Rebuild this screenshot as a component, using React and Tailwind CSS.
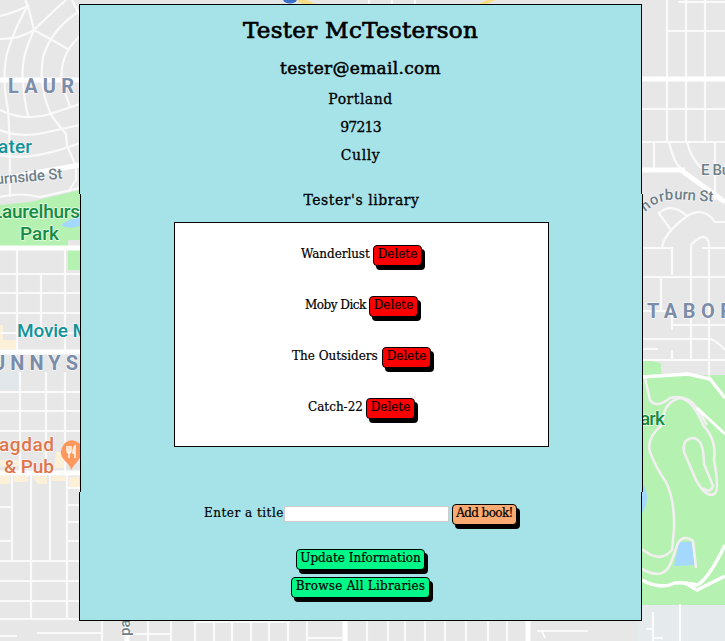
const serif = "font-['DejaVu_Serif','Liberation_Serif',serif]";

const leftRoads = [
  'M25 0L28 6L34 30L68 49', 'M0 16Q17 12 29 5', 'M0 39Q20 39 34 30Q48 16 66 0',
  'M28 5Q14 30 8 50Q1 75 8 110Q10 130 10 197', 'M34 30Q20 60 23 80Q24 100 28 116',
  'M80 11Q52 28 43 57Q38 90 53 118L66 134L67 146L76 166V180L68 192',
  'M80 36Q58 56 62 84L70 107', 'M72 0L80 16',
  'M0 110Q25 122 50 114L80 104', 'M0 130Q20 138 43 133L80 125', 'M0 155Q30 162 80 143',
  'M0 197Q20 192 40 197L80 188',
  'M0 274H80M0 293H80M0 313H80M0 333H80M0 392H80M0 411H80M0 431H80',
  'M17 247V352M41 274V340M65 247V352M20 372V473M46 372V473M65 372V473',
  'M12 475V561M31 475V620M50 475V561M67 475V620M0 507H12M0 541H12M67 488H80M67 505H80M67 522H80M67 541H80',
  'M0 561H80M0 581H80M0 601H80M0 619H80M0 636H17M37 633H102M132 634H171M102 615V641M148 620V641M171 620V641',
  'M195 622H290M195 620V641M214 620V641M232 620V641M251 620V641M269 620V641M288 620V641M307 620V641M307 638H342M367 620V641M388 620V641',
  'M405 620V641M425 620V641M445 620V641M466 620V641M488 620V641M507 620V641',
];

const rightRoads = [
  'M667 0V142M686 0V142M705 0V142M666 31H725M678 2H725M642 109H725M642 142H725M654 142V168',
  'M669 142Q673 160 680 168M687 142Q690 156 701 168M715 142V200',
  'M658 212L671 230M662 249Q662 235 687 216Q704 206 715 222H725M659 213Q672 202 687 216',
  'M642 248H672V275M642 277H725M661 277V310M642 311H672V330M672 325H725M642 339H710Q716 340 725 350M642 360H725M642 349H658M672 350V360',
  'M691 360V245Q705 230 709 243V378M702 248H725',
];

const parkRoads = [
  'M645 378L650 400Q656 409 670 398Q687 394 697 408L707 425',
  'M663 420Q664 402 680 398Q693 400 703 425Q717 440 714 460Q720 492 714 494Q706 498 696 480L684 452Q682 438 694 438Q704 440 704 464L713 486Q710 494 703 488',
  'M662 425Q646 438 650 452Q656 468 666 482Q675 500 674 530L672 550Q660 564 642 549',
  'M642 569Q665 582 672 560L678 543Q684 534 693 541L696 568',
];

function MapBackground() {
  return (
    <svg className="absolute inset-0 block h-[641px] w-[725px] font-['Roboto',sans-serif]" viewBox="0 0 725 641" aria-hidden="true">
      <rect width="725" height="641" fill="#e7e7e7" />
      <path d="M638 605H725V641H638Z" fill="#e5eaed" />
      <path d="M0 205L30 202L80 190V240H68V270H80V246H0Z" fill="#b5f1b0" />
      <path d="M61 225Q70 218 80 217V226Q67 230 61 225Z" fill="#a5d8ff" />
      <path d="M0 372H20V392H0Z" fill="#e1e7eb" />
      <path d="M0 325H3V340H17V349H0ZM0 460H24V466H0ZM56 452H64V468H54ZM0 476H10V484H0ZM14 476H28V482H14ZM32 476H47V484H38ZM52 476H66V481H52ZM69 477H79V487H69Z" fill="#fcf0d9" />
      <path d="M642 359L661 363V375H725V605H642Z" fill="#b5f1b0" />
      <path d="M642 482Q652 498 642 513ZM679 542H692L695 565L674 566Z" fill="#a5d8ff" />
      <g fill="none" stroke="#fafafa" strokeWidth="2.2">
        {[...leftRoads, ...rightRoads].map((d) => <path key={d} d={d} />)}
      </g>
      <g fill="none" stroke="#f2eff0" strokeWidth="2.6">
        {parkRoads.map((d) => <path key={d} d={d} />)}
      </g>
      <g fill="none" stroke="#fff">
        <path strokeWidth="5" d="M0 80H80M0 179L80 165M0 248H80M0 352H80M0 473H80M642 79H725M642 170H685M678 168L725 202M345 620V641M528 620V641M127 620V641" />
        <path strokeWidth="3.5" d="M642 377L688 374L710 379L725 398M725 545Q708 580 697 585Q683 582 675 583Q660 590 642 580M685 583L697 590L725 576" />
        <path strokeWidth="3" d="M697 408L725 434" />
        <path strokeWidth="1.6" d="M653 612V641M680 604V641M646 629H653M653 638H663M369 0V4M392 0V4M415 0V4M537 631H588M542 631L545 638" />
      </g>
      <path d="M296 0H307L317 5H303ZM476 5L487 0H496L484 5Z" fill="#f8de83" />
      <ellipse cx="290" cy="-1" rx="7" ry="4.5" fill="#3c6fc8" />
      <g stroke="#fff" strokeWidth="1.5" strokeOpacity="0.7" paintOrder="stroke" strokeLinejoin="round">
        <g fill="#7b8da9" fontSize="20" fontWeight="700">
          <text x="8" y="93" textLength="66">LAUR</text>
          <text x="-8" y="370" textLength="86">UNNYS</text>
          <text x="647" y="318" textLength="86">TABOR</text>
        </g>
        <g fill="#12939a" fontSize="19" fontWeight="500">
          <text x="-2" y="153" textLength="34">ater</text>
          <text x="17" y="337" textLength="72">Movie M</text>
        </g>
        <g fill="#168b44" fontSize="19" fontWeight="500">
          <text x="-8" y="218" textLength="88">Laurelhurs</text>
          <text x="20" y="240" textLength="39">Park</text>
          <text x="629" y="425" textLength="36">Park</text>
        </g>
        <g fill="#df754b" fontSize="19" fontWeight="500">
          <text x="-1" y="451" textLength="55">agdad</text>
          <text x="4" y="473" textLength="50">&amp; Pub</text>
        </g>
        <g fill="#6e7f89" fontSize="15" fontWeight="500">
          <text x="-4" y="184" textLength="67" transform="rotate(-5 0 184)">urnside St</text>
          <text x="701" y="175" textLength="29">E Bu</text>
          <text x="638" y="216" transform="rotate(-42 638 216)">T</text>
          <text x="645" y="212" transform="rotate(-38 645 212)">h</text>
          <text x="652" y="206" transform="rotate(-26 652 206)">o</text>
          <text x="660" y="202" transform="rotate(-12 660 202)">r</text>
          <text x="665" y="200" transform="rotate(-3 665 200)">b</text>
          <text x="674" y="199" textLength="39" transform="rotate(4 674 199)">urn St</text>
          <text x="130" y="636" transform="rotate(-90 130 636)">pa</text>
        </g>
      </g>
      <path d="M71 470Q70 465 65 461Q57 453 64 444Q71 437 79 443Q86 451 77 462Q73 466 71 470Z" fill="#ff985c" />
      <path d="M67 446V450Q67 453 69 453V458M71 446V450Q71 453 69 453M69 446V453M75 458V446Q73 448 73 453H75" fill="none" stroke="#fff" strokeWidth="1.4" />
    </svg>
  );
}

const books = [
  { title: 'Wanderlust', row: 'pl-[126px]', text: 'w-[69px] tracking-[-0.05px]' },
  { title: 'Moby Dick', row: 'pl-[130px]', text: 'w-[61px] tracking-[-0.5px]' },
  { title: 'The Outsiders', row: 'pl-[117px]', text: 'w-[87px] tracking-[0px]' },
  { title: 'Catch-22', row: 'pl-[133px]', text: 'w-[55px] tracking-[0px]' },
];

function Button({ children, className }) {
  return (
    <button className={`flex h-[21px] shrink-0 items-start justify-center whitespace-nowrap rounded-[4px] border border-black text-xs leading-[17px] shadow-[3px_4px_0_#000] [-webkit-text-stroke:0.2px_black] ${className}`}>
      {children}
    </button>
  );
}

export default function App() {
  return (
    <div className={`relative h-[641px] w-[725px] overflow-hidden text-black [-webkit-text-stroke:0.2px_black] ${serif}`}>
      <div className="[-webkit-text-stroke:0px]">
        <MapBackground />
      </div>
      <main className="relative ml-[79px] w-[564px] pt-1">
        <section className="h-[190px] w-[563px] border border-b-0 border-black bg-[#a6e3e9] text-center">
          <h1 className="pt-[8px] text-[23px] leading-[34px] tracking-[0.3px] [-webkit-text-stroke:0.7px_black]">Tester McTesterson</h1>
          <h2 className="pt-[8px] text-[17px] leading-[26px] tracking-[0.3px] [-webkit-text-stroke:0.5px_black]">tester@email.com</h2>
          <p className="pt-[8px] text-sm leading-[20px] tracking-[0.5px] [-webkit-text-stroke:0.3px_black]">Portland</p>
          <p className="pt-[8px] text-sm leading-[20px] tracking-[-0.8px] [-webkit-text-stroke:0.3px_black]">97213</p>
          <p className="pt-[8px] text-sm leading-[20px] tracking-[0.6px] [-webkit-text-stroke:0.3px_black]">Cully</p>
        </section>
        <section className="ml-px h-[298px] w-[563px] border-x border-black bg-[#a6e3e9]">
          <h3 className="h-[28px] text-center text-sm leading-[12px] tracking-[0.55px] [-webkit-text-stroke:0.3px_black]">Tester's library</h3>
          <ul className="ml-[93px] flex h-[225px] w-[375px] flex-col gap-[30px] border border-black bg-white pt-[22px]">
            {books.map((book) => (
              <li key={book.title} className={`flex h-[21px] ${book.row}`}>
                <span className={`mr-[3px] whitespace-nowrap text-xs leading-[19px] ${book.text}`}>{book.title}</span>
                <Button className="w-[49px] bg-[#ff0000]">Delete</Button>
              </li>
            ))}
          </ul>
        </section>
        <section className="h-[129px] w-[563px] border border-t-0 border-black bg-[#a6e3e9]">
          <form className="flex pt-[12px] pl-[124px]" onSubmit={(event) => event.preventDefault()}>
            <label htmlFor="title" className="w-[80px] whitespace-nowrap text-xs leading-[18px] tracking-[0.5px]">Enter a title</label>
            <input id="title" className="mt-[2px] mr-[3px] h-[16px] w-[165px] border border-[#ccc] bg-white" />
            <Button className="w-[65px] bg-[#f8aa72] tracking-[-0.6px]">Add book!</Button>
          </form>
          <div className="flex flex-col gap-[7px] pt-[24px]">
            <Button className="ml-[216px] w-[129px] bg-[#00f889]">Update Information</Button>
            <Button className="ml-[211px] w-[139px] bg-[#00f889] tracking-[0.25px]">Browse All Libraries</Button>
          </div>
        </section>
      </main>
    </div>
  );
}
